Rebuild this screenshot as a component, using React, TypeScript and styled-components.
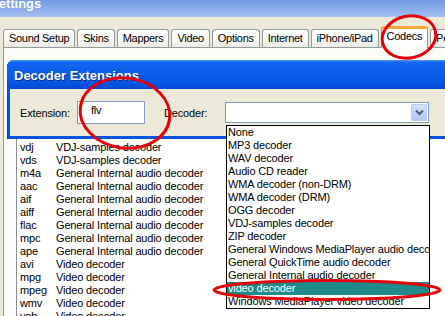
import styled, { createGlobalStyle } from "styled-components";

const GlobalStyle = createGlobalStyle`
  html, body {
    margin: 0;
    padding: 0;
  }
  body {
    background: #ece9d8;
    font-family: "Liberation Sans", Arial, sans-serif;
    font-size: 11px;
    letter-spacing: -0.15px;
    color: #000;
  }
`;

const Window = styled.div`
  position: relative;
  width: 445px;
  height: 316px;
  overflow: hidden;
  background: #ece9d8;
  display: flex;
  flex-direction: column;
`;

const TitleBar = styled.div`
  flex: none;
  height: 17px;
  overflow: hidden;
  background: linear-gradient(180deg, #7698e3 0%, #8eafec 60%, #a7c1f1 100%);
  color: #fff;
  font-weight: bold;
  font-size: 13px;
  line-height: 13px;
  letter-spacing: 0;

  span {
    display: block;
    margin: -3px 0 0 -10px;
  }
`;

const TabStrip = styled.div`
  flex: none;
  height: 30px;
  display: flex;
  align-items: flex-end;
  gap: 2px;
  padding-left: 3px;
`;

const Tab = styled.div<{ $active?: boolean }>`
  flex: none;
  box-sizing: border-box;
  height: ${(p) => (p.$active ? "22px" : "18px")};
  margin-bottom: ${(p) => (p.$active ? "-1px" : "0")};
  padding: 0 5px;
  letter-spacing: -0.3px;
  line-height: ${(p) => (p.$active ? "15px" : "17px")};
  border: 1px solid #919b9c;
  border-bottom: none;
  border-top: ${(p) => (p.$active ? "3px solid #f5a93a" : "1px solid #919b9c")};
  border-radius: 3px 3px 0 0;
  background: ${(p) =>
    p.$active
      ? "#fcfcfe"
      : "linear-gradient(180deg, #ffffff 0%, #f7f7f3 60%, #ecebe5 100%)"};
  position: relative;
  z-index: ${(p) => (p.$active ? 1 : 0)};
  white-space: nowrap;
`;

const Panel = styled.div`
  flex: 1;
  margin-left: 3px;
  width: 470px;
  border: 1px solid #919b9c;
  background: #fbfbf8;
`;

const ListBox = styled.div`
  margin: 90px 0 0 12px;
  padding: 2px 0 0 3px;
  border: 1px solid #8a8f95;
  background: #fff;
`;

const ListRow = styled.div`
  display: grid;
  grid-template-columns: 36px 1fr;
  height: 13px;
  line-height: 13px;
  white-space: nowrap;
`;

const Dialog = styled.div`
  position: absolute;
  left: 7px;
  top: 60px;
  width: 470px;
  height: 79px;
  box-sizing: border-box;
  display: flex;
  flex-direction: column;
  padding: 0 3px 3px 3px;
  border-radius: 7px 7px 0 0;
  background: #0553e2;
  box-shadow: inset 1px 0 0 #0a3bd0;
  z-index: 2;
`;

const DialogTitle = styled.div`
  flex: none;
  height: 29px;
  margin: 0 -3px;
  padding-left: 7px;
  border-radius: 7px 7px 0 0;
  background: linear-gradient(
    180deg,
    #4e95fb 0%,
    #1467f2 8%,
    #0a5ee9 40%,
    #0558e6 75%,
    #0249d3 100%
  );
  color: #fff;
  font-weight: bold;
  font-size: 13px;
  line-height: 29px;
  letter-spacing: 0;
  padding-top: 1px;
  box-sizing: border-box;
  text-shadow: 1px 1px 0 #0a2c8c;
`;

const DialogBody = styled.div`
  flex: 1;
  background: #ece9d8;
  display: flex;
  align-items: center;
  padding: 0 0 0 10px;
`;

const Label = styled.span<{ $gap: number }>`
  margin-right: ${(p) => p.$gap}px;
`;

const TextInput = styled.div`
  box-sizing: border-box;
  width: 68px;
  height: 23px;
  margin-right: 19px;
  padding: 2px 0 0 13px;
  border: 1px solid #7f9db9;
  background: #fff;
  line-height: 13px;
`;

const Combo = styled.div`
  position: relative;
  box-sizing: border-box;
  width: 204px;
  height: 21px;
  border: 1px solid #7f9db9;
  background: #fff;
  display: flex;
  justify-content: flex-end;
  padding: 1px;
`;

const ComboButton = styled.div`
  box-sizing: border-box;
  width: 16px;
  height: 17px;
  border: 1px solid #bacbf5;
  border-radius: 1px;
  background: linear-gradient(180deg, #d6e2fd 0%, #c3d4fb 50%, #b4c8f6 100%);
  display: flex;
  align-items: center;
  justify-content: center;
`;

const DropList = styled.div`
  position: absolute;
  left: 226px;
  top: 125px;
  width: 204px;
  box-sizing: border-box;
  border: 1px solid #000;
  background: #fff;
  z-index: 3;
  overflow: hidden;
`;

const DropItem = styled.div<{ $selected?: boolean }>`
  height: 13px;
  line-height: 13px;
  padding-left: 1px;
  white-space: nowrap;
  background: ${(p) => (p.$selected ? "#1e8a8a" : "transparent")};
  color: ${(p) => (p.$selected ? "#fff" : "#000")};
`;

const Marks = styled.svg`
  position: absolute;
  left: 0;
  top: 0;
  z-index: 5;
  pointer-events: none;
`;

const tabs = [
  "Sound Setup",
  "Skins",
  "Mappers",
  "Video",
  "Options",
  "Internet",
  "iPhone/iPad",
  "Codecs",
  "Pe",
];

const codecs: [string, string][] = [
  ["vdj", "VDJ-samples decoder"],
  ["vds", "VDJ-samples decoder"],
  ["m4a", "General Internal audio decoder"],
  ["aac", "General Internal audio decoder"],
  ["aif", "General Internal audio decoder"],
  ["aiff", "General Internal audio decoder"],
  ["flac", "General Internal audio decoder"],
  ["mpc", "General Internal audio decoder"],
  ["ape", "General Internal audio decoder"],
  ["avi", "Video decoder"],
  ["mpg", "Video decoder"],
  ["mpeg", "Video decoder"],
  ["wmv", "Video decoder"],
  ["vob", "Video decoder"],
];

const decoders = [
  "None",
  "MP3 decoder",
  "WAV decoder",
  "Audio CD reader",
  "WMA decoder (non-DRM)",
  "WMA decoder (DRM)",
  "OGG decoder",
  "VDJ-samples decoder",
  "ZIP decoder",
  "General Windows MediaPlayer audio decoder",
  "General QuickTime audio decoder",
  "General Internal audio decoder",
  "video decoder",
  "Windows MediaPlayer video decoder",
];

const App = () => {
  return (
    <Window>
      <GlobalStyle />
      <TitleBar>
        <span>Settings</span>
      </TitleBar>
      <TabStrip>
        {tabs.map((t) => (
          <Tab key={t} $active={t === "Codecs"}>
            {t}
          </Tab>
        ))}
      </TabStrip>
      <Panel>
        <ListBox>
          {codecs.map(([ext, dec]) => (
            <ListRow key={ext}>
              <span>{ext}</span>
              <span>{dec}</span>
            </ListRow>
          ))}
        </ListBox>
      </Panel>

      <Dialog>
        <DialogTitle>Decoder Extensions</DialogTitle>
        <DialogBody>
          <Label $gap={7}>Extension:</Label>
          <TextInput>flv</TextInput>
          <Label $gap={18}>Decoder:</Label>
          <Combo>
            <ComboButton>
              <svg width="9" height="7" viewBox="0 0 9 7">
                <path
                  d="M1 1.5 L4.5 5 L8 1.5"
                  fill="none"
                  stroke="#4d6185"
                  strokeWidth="2"
                />
              </svg>
            </ComboButton>
          </Combo>
        </DialogBody>
      </Dialog>

      <DropList>
        {decoders.map((d) => (
          <DropItem key={d} $selected={d === "video decoder"}>
            {d}
          </DropItem>
        ))}
      </DropList>

      <Marks width="445" height="316" viewBox="0 0 445 316">
        <g fill="none" stroke="#e3000b" strokeWidth="3">
          <ellipse cx="409" cy="37" rx="27" ry="21" transform="rotate(-12 409 37)" />
          <ellipse cx="125" cy="113" rx="45" ry="35" transform="rotate(8 125 113)" />
          <ellipse cx="327" cy="290" rx="113" ry="9.5" />
        </g>
      </Marks>
    </Window>
  );
};

export default App;
